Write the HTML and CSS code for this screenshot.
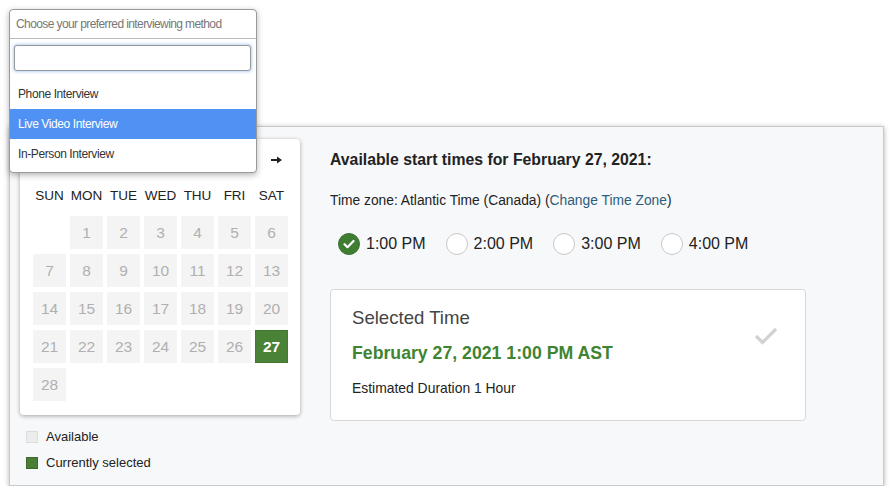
FILE: index.html
```html
<!DOCTYPE html>
<html>
    <head>
        <meta charset="utf-8">
        <title>Schedule Interview</title>
        <link rel="stylesheet" href="styles.css">
    </head>
    <body>
        <div class="panel">
            <div class="left">
                <div class="calendar">
                    <div class="cal-nav">
                        <svg class="next" width="11" height="8" viewBox="0 0 11 8"><path d="M0 3h6V0.5L11 4 6 7.5V5H0z" fill="#222"/></svg>
                    </div>
                    <div class="weekdays">
                        <span>SUN</span><span>MON</span><span>TUE</span><span>WED</span><span>THU</span><span>FRI</span><span>SAT</span>
                    </div>
                    <div class="days">
                        <span class="blank"></span>
                        <span>1</span><span>2</span><span>3</span><span>4</span><span>5</span><span>6</span>
                        <span>7</span><span>8</span><span>9</span><span>10</span><span>11</span><span>12</span><span>13</span>
                        <span>14</span><span>15</span><span>16</span><span>17</span><span>18</span><span>19</span><span>20</span>
                        <span>21</span><span>22</span><span>23</span><span>24</span><span>25</span><span>26</span><span class="selected">27</span>
                        <span>28</span>
                    </div>
                </div>
                <ul class="legend">
                    <li><i class="sw sw-avail"></i>Available</li>
                    <li><i class="sw sw-sel"></i>Currently selected</li>
                </ul>
            </div>
            <div class="right">
                <h2 class="title">Available start times for February 27, 2021:</h2>
                <p class="tz">Time zone: Atlantic Time (Canada) (<a href="#">Change Time Zone</a>)</p>
                <div class="times">
                    <label class="time on"><span class="radio"><svg width="12" height="10" viewBox="0 0 12 10"><path d="M1.5 5.2l3 3 6-6.2" fill="none" stroke="#fff" stroke-width="2.2" stroke-linecap="round" stroke-linejoin="round"/></svg></span>1:00 PM</label>
                    <label class="time"><span class="radio"></span>2:00 PM</label>
                    <label class="time"><span class="radio"></span>3:00 PM</label>
                    <label class="time"><span class="radio"></span>4:00 PM</label>
                </div>
                <div class="picked">
                    <h3>Selected Time</h3>
                    <p class="when">February 27, 2021 1:00 PM AST</p>
                    <p class="dur">Estimated Duration 1 Hour</p>
                    <svg class="tick" width="24" height="18" viewBox="0 0 24 18"><path d="M2 9l6.5 6.5L22 2" fill="none" stroke="#d2d2d2" stroke-width="3.2"/></svg>
                </div>
            </div>
        </div>

        <div class="dropdown">
            <div class="dd-head">Choose your preferred interviewing method</div>
            <div class="dd-search"><input type="text"></div>
            <ul class="dd-list">
                <li>Phone Interview</li>
                <li class="hl">Live Video Interview</li>
                <li>In-Person Interview</li>
            </ul>
        </div>
    </body>
</html>
```

FILE: styles.css
```css
*{
    box-sizing:border-box;
}
body,div,ul,li,p,h2,h3{
    margin:0;
    padding:0;
}
body{
    font:13px/1.5 "Liberation Sans", Arial, sans-serif;
    color:#222;
    background:#fff;
}
ul{
    list-style-type:none;
}
.panel{
    display:flex;
    width:875px;
    height:360px;
    margin:126px 0 0 9px;
    background:#f7f8fa;
    border:1px solid #c9c9c9;
    box-shadow:0 1px 5px rgba(0,0,0,.3);
}
.left{
    padding:12px 0 0 10px;
}
.calendar{
    width:280px;
    height:276px;
    padding:12px 12px 0 13px;
    background:#fff;
    border-radius:4px;
    box-shadow:0 1px 4px rgba(0,0,0,.35);
}
.cal-nav{
    display:flex;
    justify-content:flex-end;
    align-items:center;
    height:18px;
    padding-right:6px;
}
.weekdays,.days{
    display:grid;
    grid-template-columns:repeat(7,33px);
    column-gap:4px;
}
.weekdays{
    margin-top:17px;
    line-height:20px;
    font-size:13.5px;
    text-align:center;
    color:#222;
}
.days{
    margin-top:10px;
    row-gap:5px;
}
.days span{
    height:33px;
    line-height:33px;
    text-align:center;
    font-size:15.5px;
    color:#b0b0b0;
    background:#f4f4f4;
}
.days .blank{
    background:none;
}
.days .selected{
    color:#fff;
    font-weight:700;
    background:#4a8237;
    border:1px dotted #3b6e2b;
    line-height:31px;
}
.legend{
    margin:12px 0 0 6px;
}
.legend li{
    display:flex;
    align-items:center;
    height:20px;
    margin-bottom:6px;
    font-size:13px;
    color:#222;
}
.sw{
    display:block;
    width:12px;
    height:12px;
    margin-right:8px;
}
.sw-avail{
    background:#ececec;
    border:1px solid #dcdcdc;
}
.sw-sel{
    background:#4a7e36;
    border:1px solid #3d6b2b;
}
.right{
    padding:23px 0 0 30px;
}
.title{
    font-size:15.8px;
    font-weight:700;
    line-height:20px;
    color:#222;
}
.tz{
    margin-top:21px;
    line-height:20px;
    font-size:13.8px;
}
.tz a{
    color:#2b5d7c;
    text-decoration:none;
}
.times{
    display:flex;
    margin:22px 0 0 8px;
    height:22px;
}
.time{
    display:flex;
    align-items:center;
    margin-right:20px;
    font-size:16px;
    line-height:22px;
    color:#222;
}
.radio{
    display:flex;
    align-items:center;
    justify-content:center;
    width:22px;
    height:22px;
    margin-right:6px;
    border-radius:50%;
    background:#fff;
    border:1px solid #c8c8c8;
}
.time.on .radio{
    background:#3f7d32;
    border-color:#3a722e;
}
.picked{
    position:relative;
    width:476px;
    height:132px;
    margin-top:34px;
    padding:17px 0 0 21px;
    background:#fff;
    border:1px solid #d6d6d6;
    border-radius:4px;
}
.picked h3{
    font-size:18.6px;
    font-weight:400;
    line-height:22px;
    color:#444;
}
.when{
    margin-top:13px;
    font-size:17.7px;
    font-weight:700;
    line-height:22px;
    color:#3f8430;
}
.dur{
    margin-top:15px;
    font-size:13.9px;
    line-height:18px;
    color:#222;
}
.tick{
    position:absolute;
    top:37px;
    right:27px;
}
.dropdown{
    position:absolute;
    top:9px;
    left:9px;
    width:248px;
    height:164px;
    background:#fff;
    border:1px solid #9a9a9a;
    border-radius:4px;
    box-shadow:0 2px 6px rgba(0,0,0,.3);
}
.dd-head{
    height:29px;
    line-height:28px;
    padding-left:6px;
    font-size:12px;
    letter-spacing:-0.6px;
    color:#777;
    border-bottom:1px solid #bbb;
}
.dd-search{
    padding:6px 5px 0 4px;
}
.dd-search input{
    display:block;
    width:100%;
    height:26px;
    border:1px solid #999;
    border-radius:3px;
    box-shadow:0 0 3px 1px #b7d3f5;
    outline:none;
}
.dd-list{
    margin-top:8px;
}
.dd-list li{
    height:30px;
    line-height:30px;
    padding-left:8px;
    font-size:12px;
    letter-spacing:-0.4px;
    color:#333;
}
.dd-list li.hl{
    color:#fff;
    background:#4f92f3;
}
```
